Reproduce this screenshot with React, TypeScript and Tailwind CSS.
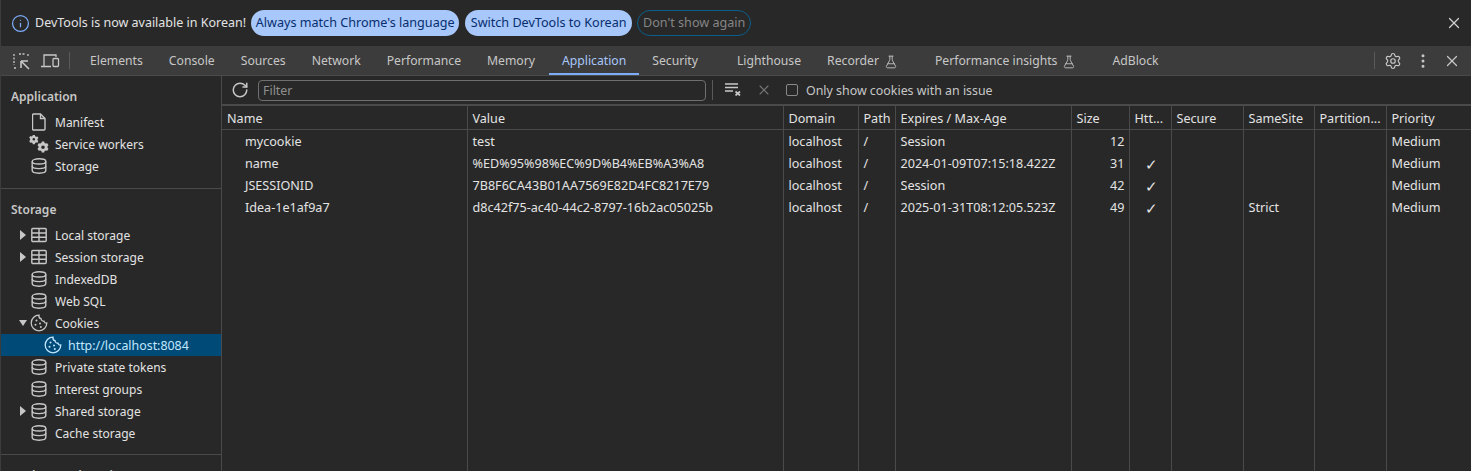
import React from 'react';
import { Info, X, RotateCw, Settings, EllipsisVertical, FlaskConical } from 'lucide-react';

const DbIcon = () => (
  <svg width="16" height="16" viewBox="0 0 16 16" fill="none" stroke="#c7c7c7" strokeWidth="1.4">
    <ellipse cx="8" cy="3.4" rx="6.8" ry="2.6" />
    <path d="M1.2 3.400v9.200c0 1.400 3 2.600 6.800 2.600s6.800-1.200 6.800-2.600V3.400" />
    <path d="M1.200 8c0 1.400 3 2.600 6.800 2.600s6.800-1.200 6.800-2.600" />
  </svg>
);

const TableIcon = () => (
  <svg width="16" height="16" viewBox="0 0 16 16" fill="none" stroke="#c7c7c7" strokeWidth="1.4">
    <rect x="0.800" y="1.500" width="14.400" height="13" rx="1" />
    <path d="M1 6h14M1 10.300h14M8 1.500v13" />
  </svg>
);

const CookieIcon = ({ color = '#c7c7c7' }: { color?: string }) => (
  <svg width="18" height="18" viewBox="0 0 18 18" fill="none" stroke={color} strokeWidth="1.3">
    <path d="M9 1.200a7.800 7.800 0 1 0 7.800 7.800c-1.400.3-2.600-.5-2.800-1.800-1.500.2-2.900-.9-2.900-2.500C9.700 4.500 8.800 3 9 1.200z" />
    <circle cx="6.500" cy="6.500" r="1" fill={color} stroke="none" />
    <circle cx="5.500" cy="10.800" r="1" fill={color} stroke="none" />
    <circle cx="10" cy="9.500" r="1" fill={color} stroke="none" />
    <circle cx="10.800" cy="13" r="1" fill={color} stroke="none" />
  </svg>
);

const FileIcon = () => (
  <svg width="14" height="18" viewBox="0 0 14 18" fill="none" stroke="#c7c7c7" strokeWidth="1.4">
    <path d="M1.500 1h7l4.500 4.500V16a1 1 0 0 1-1 1H1.500a1 1 0 0 1-1-1V2a1 1 0 0 1 1-1z" />
    <path d="M8.500 1v4.500H13" />
  </svg>
);

const GearsIcon = () => (
  <svg width="20" height="18" viewBox="0 0 20 18" fill="#c7c7c7">
    <path fillRule="evenodd" d="M3.800 0h2l.3 1.200 1.100.6 1.200-.4 1 1.700-.9.900v1.200l.9.900-1 1.700-1.200-.4-1.100.6-.3 1.200h-2l-.3-1.200-1.100-.6-1.200.4-1-1.700.9-.9V3.700l-.9-.9 1-1.700 1.200.4 1.100-.6zM4.800 3a1.300 1.300 0 1 0 0 2.600 1.300 1.300 0 0 0 0-2.600z" />
    <path fillRule="evenodd" d="M12.800 6.500h2.400l.4 1.400 1.300.7 1.400-.4 1.200 2-1 1v1.600l1 1-1.200 2-1.400-.4-1.300.7-.4 1.400h-2.400l-.4-1.400-1.300-.7-1.400.4-1.200-2 1-1v-1.600l-1-1 1.200-2 1.400.4 1.300-.7zM14 10.500a1.800 1.800 0 1 0 0 3.600 1.800 1.800 0 0 0 0-3.600z" />
  </svg>
);

const Arrow = ({ open }: { open?: boolean }) => (
  <svg width="8" height="10" viewBox="0 0 8 10" fill="#c7c7c7" className="shrink-0">
    {open ? <path d="M0 2h8L4 8z" /> : <path d="M1 0l6 5-6 5z" />}
  </svg>
);

const SideRow = ({ icon, label, arrow, open }: { icon: React.ReactNode; label: string; arrow?: boolean; open?: boolean }) => (
  <div className="flex h-[22px] items-center">
    <div className="flex w-[28px] shrink-0 justify-end pr-[2px]">{arrow && <Arrow open={open} />}</div>
    <div className="flex w-[20px] shrink-0 justify-center">{icon}</div>
    <span className="ml-[6px] pt-[2px]">{label}</span>
  </div>
);

const tabs = [
  { label: 'Elements', cls: 'ml-[7px]' },
  { label: 'Console' },
  { label: 'Sources' },
  { label: 'Network' },
  { label: 'Performance' },
  { label: 'Memory', cls: 'mr-[1px]' },
  { label: 'Application', active: true },
  { label: 'Security', cls: 'mr-[13px]' },
  { label: 'Lighthouse' },
  { label: 'Recorder', flask: true, cls: 'mr-[11px]' },
  { label: 'Performance insights', flask: true, cls: 'mr-[10px]' },
  { label: 'AdBlock' },
];

const widths = [245, 316, 75, 37, 176, 58, 42, 72, 71, 72, 85];
const headers = ['Name', 'Value', 'Domain', 'Path', 'Expires / Max-Age', 'Size', 'Htt...', 'Secure', 'SameSite', 'Partition...', 'Priority'];
const rows = [
  ['mycookie', 'test', 'localhost', '/', 'Session', '12', '', '', '', '', 'Medium'],
  ['name', '%ED%95%98%EC%9D%B4%EB%A3%A8', 'localhost', '/', '2024-01-09T07:15:18.422Z', '31', '✓', '', '', '', 'Medium'],
  ['JSESSIONID', '7B8F6CA43B01AA7569E82D4FC8217E79', 'localhost', '/', 'Session', '42', '✓', '', '', '', 'Medium'],
  ['Idea-1e1af9a7', 'd8c42f75-ac40-44c2-8797-16b2ac05025b', 'localhost', '/', '2025-01-31T08:12:05.523Z', '49', '✓', '', 'Strict', '', 'Medium'],
];

export default function App() {
  return (
    <div className="flex h-[471px] w-[1471px] flex-col overflow-hidden border-l border-[#3c3c3c] bg-[#282828] font-['Noto_Sans',sans-serif] text-[12px] text-[#e3e3e3]">
      <div className="flex h-[46px] shrink-0 items-center pl-[10px] pr-[8px] text-[12.6px]">
        <Info size={19} color="#7cacf8" strokeWidth={1.6} />
        <span className="ml-[5px] text-[12.5px]">DevTools is now available in Korean!</span>
        <div className="ml-[5px] flex h-[26px] w-[208px] items-center justify-center rounded-full bg-[#a8c7fa] text-[#062e6f]">Always match Chrome's language</div>
        <div className="ml-[6px] flex h-[26px] w-[167px] items-center justify-center rounded-full bg-[#a8c7fa] text-[#062e6f]">Switch DevTools to Korean</div>
        <div className="ml-[5px] flex h-[26px] w-[114px] items-center justify-center rounded-full border border-[#0b5f8c] text-[#858585]">Don't show again</div>
        <X size={18} color="#d0d0d0" className="ml-auto" strokeWidth={1.6} />
      </div>

      <div className="flex h-[30px] shrink-0 items-center border-b border-[#4a4a4a] bg-[#3c3c3c] text-[12.2px] text-[#c7c7c7]">
        <svg width="18" height="18" viewBox="0 0 18 18" fill="none" stroke="#c7c7c7" strokeWidth="1.300" className="ml-[11px]">
          <path d="M7 2h6M2 2v11M2 16h2M16 2v3" strokeDasharray="2 1.500" />
          <path d="M9 9l7 0M9 9v7M9 9l8 8" strokeWidth="1.600" />
        </svg>
        <svg width="20" height="16" viewBox="0 0 20 16" fill="none" stroke="#c7c7c7" strokeWidth="1.300" className="ml-[10px]">
          <path d="M4 13V2h12v2M1 13.500h10" />
          <rect x="13" y="5.500" width="5.500" height="8" rx="1" />
        </svg>
        <div className="ml-[9px] h-[17px] w-px bg-[#5a5a5a]" />
        {tabs.map((t) => (
          <div
            key={t.label}
            className={`flex h-full items-center gap-[5px] border-b-2 px-[13px] pt-[4px] ${t.active ? 'border-[#7cacf8] text-[#a8c7fa]' : 'border-transparent'} ${t.cls ?? ''}`}
          >
            {t.label}
            {t.flask && <FlaskConical size={14} strokeWidth={1.500} />}
          </div>
        ))}
        <div className="ml-auto h-[17px] w-px bg-[#5a5a5a]" />
        <Settings size={18} className="ml-[9px]" strokeWidth={1.600} />
        <EllipsisVertical size={18} className="ml-[12px]" strokeWidth={2} />
        <X size={18} className="ml-[11px] mr-[10px]" strokeWidth={1.600} />
      </div>

      <div className="flex min-h-0 flex-1">
        <aside className="w-[221px] shrink-0 overflow-hidden border-r border-[#4a4a4a]">
          <div className="border-b border-[#4a4a4a] pb-[11px]">
            <div className="flex h-[35px] items-center pl-[10px] pt-[7px] font-semibold text-[#c7c7c7]">Application</div>
            <SideRow icon={<FileIcon />} label="Manifest" />
            <SideRow icon={<GearsIcon />} label="Service workers" />
            <SideRow icon={<DbIcon />} label="Storage" />
          </div>
          <div className="border-b border-[#4a4a4a] pb-[10px]">
            <div className="flex h-[35px] items-center pl-[10px] pt-[7px] font-semibold text-[#c7c7c7]">Storage</div>
            <SideRow arrow icon={<TableIcon />} label="Local storage" />
            <SideRow arrow icon={<TableIcon />} label="Session storage" />
            <SideRow icon={<DbIcon />} label="IndexedDB" />
            <SideRow icon={<DbIcon />} label="Web SQL" />
            <SideRow arrow open icon={<CookieIcon />} label="Cookies" />
            <div className="flex h-[22px] items-center bg-[#004a77] pl-[43px] text-[#c2e7ff]">
              <CookieIcon color="#c2e7ff" />
              <span className="ml-[6px] pt-[2px] text-[12.4px]">http://localhost:8084</span>
            </div>
            <SideRow icon={<DbIcon />} label="Private state tokens" />
            <SideRow icon={<DbIcon />} label="Interest groups" />
            <SideRow arrow icon={<DbIcon />} label="Shared storage" />
            <SideRow icon={<DbIcon />} label="Cache storage" />
          </div>
          <div className="flex h-[35px] items-center pl-[10px] pt-[7px] font-semibold text-[#c7c7c7]">Background services</div>
        </aside>

        <main className="flex min-w-0 flex-1 flex-col">
          <div className="flex h-[30px] shrink-0 items-center border-b-2 border-[#4a4a4a] text-[12.4px] text-[#c7c7c7]">
            <RotateCw size={18} className="ml-[9px]" strokeWidth={2} />
            <div className="ml-[9px] flex h-[21px] w-[448px] items-center rounded-[4px] border border-[#6f6f6f] pl-[4px] pt-[3px] text-[#8f8f8f]">Filter</div>
            <div className="ml-[6px] h-[20px] w-px bg-[#5a5a5a]" />
            <svg width="18" height="14" viewBox="0 0 18 14" fill="none" stroke="#c7c7c7" strokeWidth="1.300" className="ml-[11px] -mt-[3px]">
              <path d="M1 2h13M1 5.500h13M1 9h8" />
              <path d="M11.500 9.500l4.500 4M16 9.500l-4.500 4" strokeWidth="1.700" />
            </svg>
            <X size={16} color="#777" className="ml-[14px]" strokeWidth={1.600} />
            <div className="ml-[14px] h-[12px] w-[12px] rounded-[2px] border border-[#8a8a8a]" />
            <span className="ml-[8px] pt-[3px]">Only show cookies with an issue</span>
          </div>
          <table className="h-full w-[1249px] table-fixed border-collapse text-[12.6px] leading-[16px]">
            <colgroup>
              {widths.map((w, i) => (
                <col key={i} style={{ width: w }} />
              ))}
            </colgroup>
            <thead>
              <tr className="h-[23px] border-b border-[#4a4a4a]">
                {headers.map((h, i) => (
                  <th key={i} className="border-r border-[#4a4a4a] pl-[5px] pt-[4px] text-left font-normal whitespace-nowrap last:border-r-0">{h}</th>
                ))}
              </tr>
            </thead>
            <tbody>
              {rows.map((r) => (
                <tr key={r[0]} className="h-[22px]">
                  {r.map((c, i) => (
                    <td key={i} className={`overflow-hidden border-r border-[#4a4a4a] pt-[4px] whitespace-nowrap last:border-r-0 ${i === 0 ? 'pl-[23px]' : i === 5 ? 'pr-[4px] text-right' : i === 6 ? 'pl-[15px] text-[15px] leading-none' : 'pl-[5px]'}`}>{c}</td>
                  ))}
                </tr>
              ))}
              <tr className="h-full">
                {headers.map((h, i) => (
                  <td key={i} className="border-r border-[#4a4a4a] last:border-r-0" />
                ))}
              </tr>
            </tbody>
          </table>
        </main>
      </div>
    </div>
  );
}
